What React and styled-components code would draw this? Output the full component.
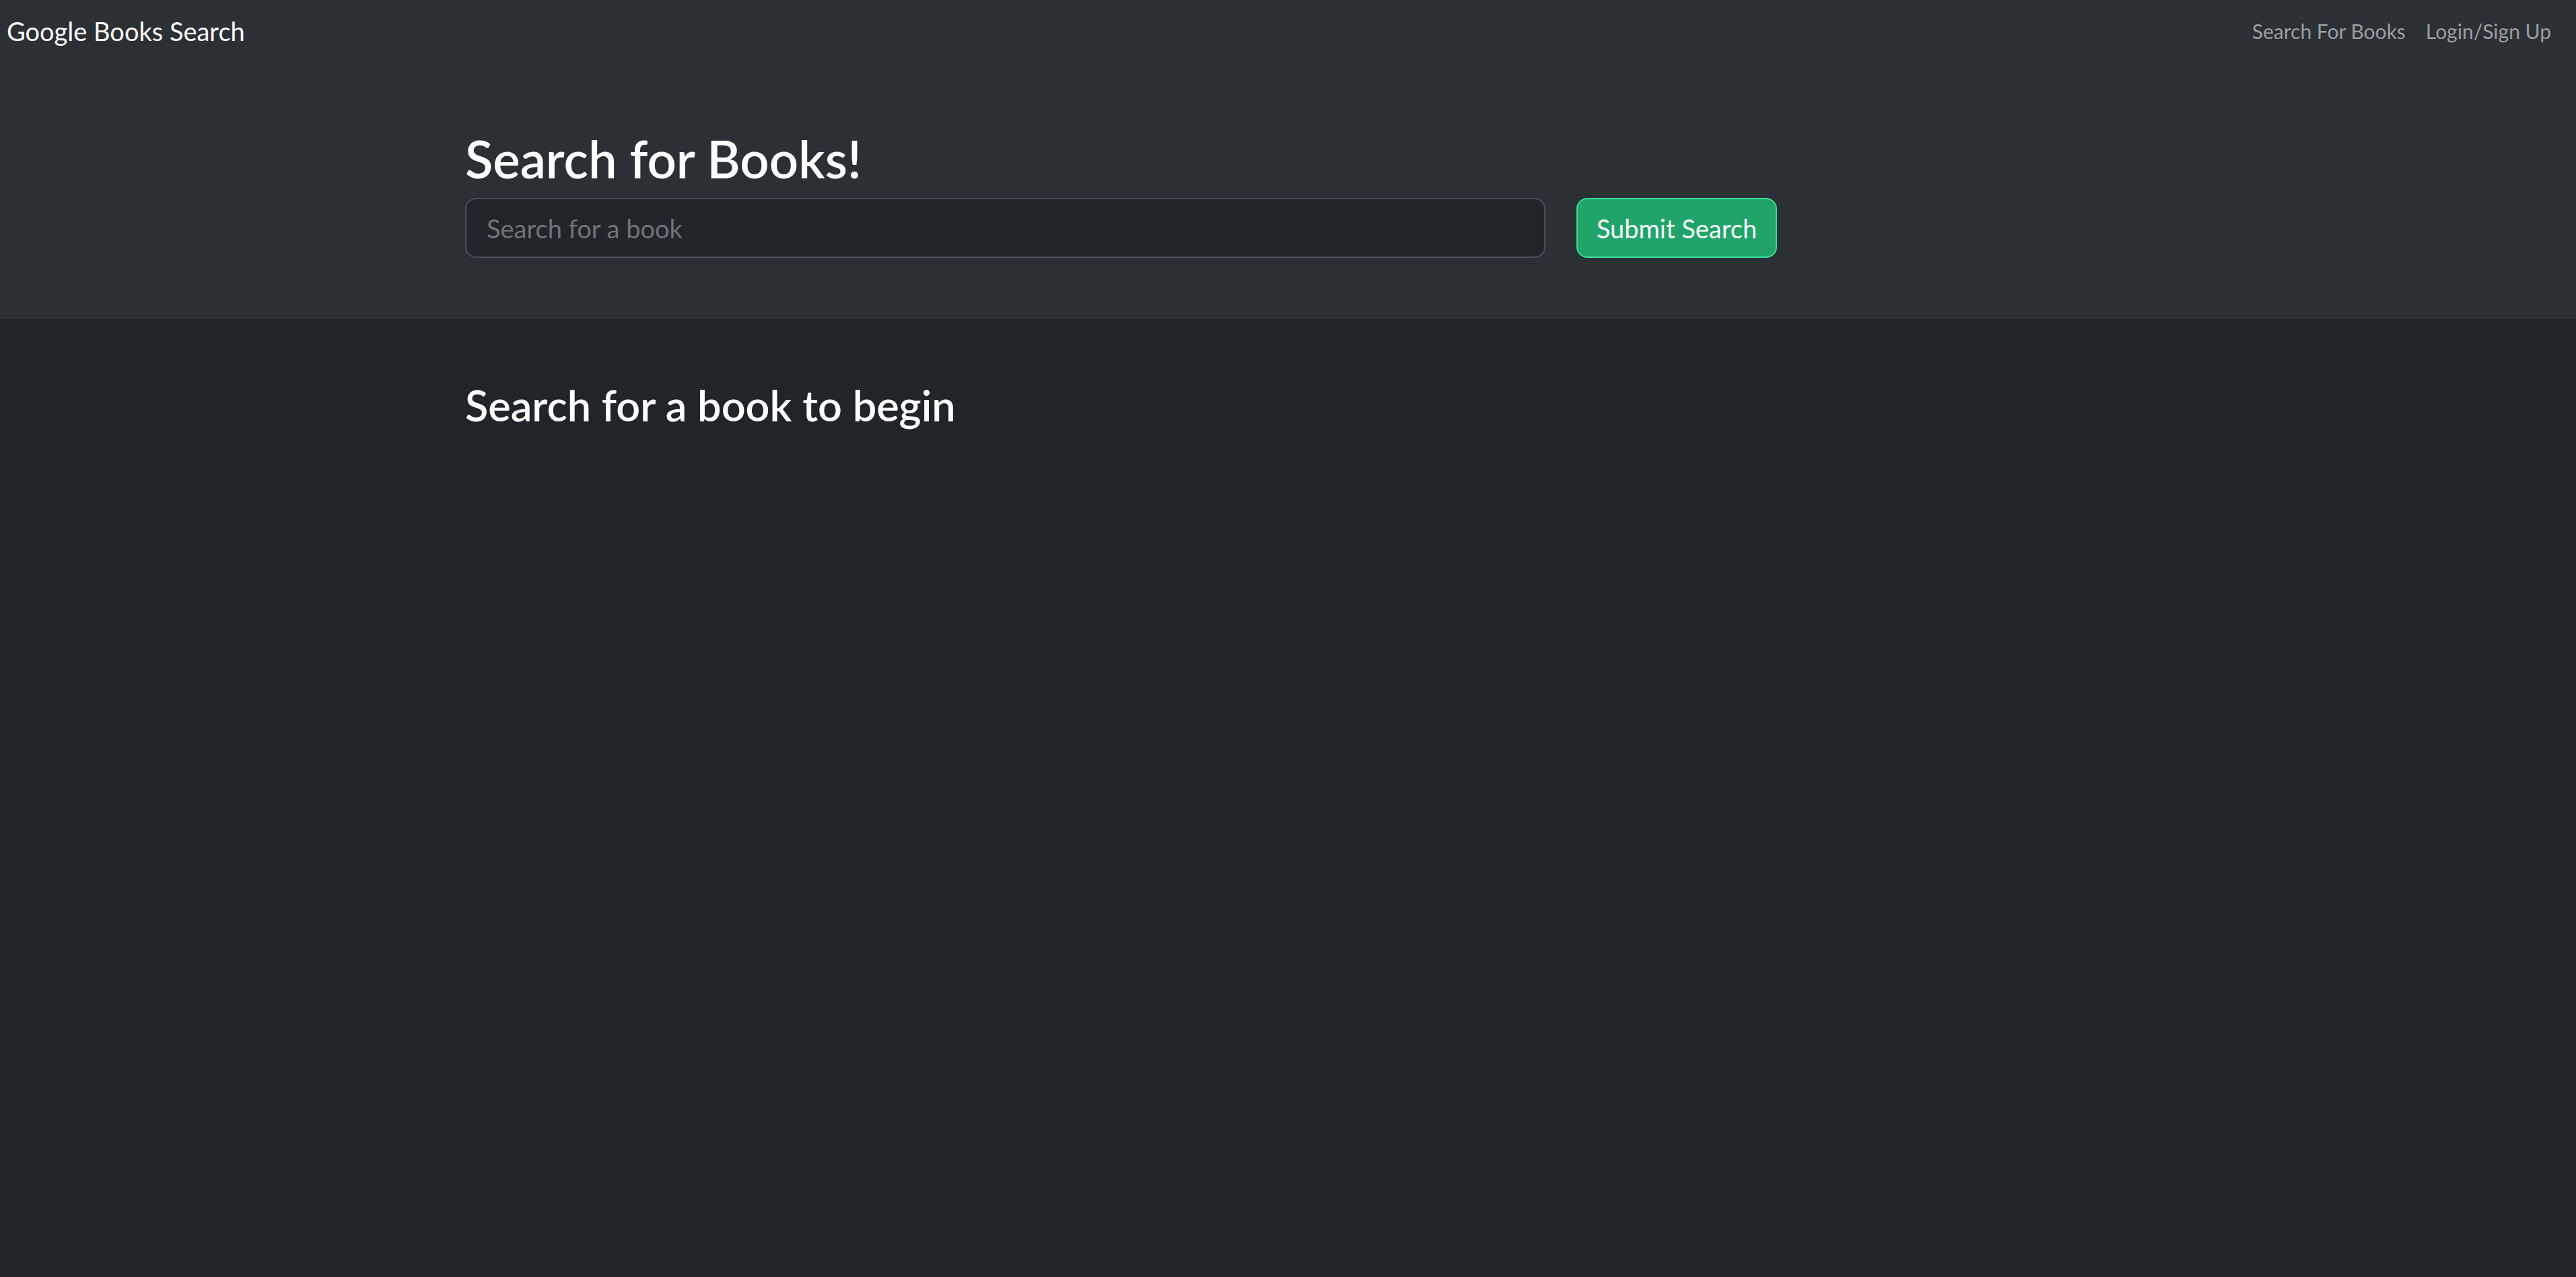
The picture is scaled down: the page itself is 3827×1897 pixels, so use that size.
import React from 'react'
import styled, { createGlobalStyle } from 'styled-components'

const GlobalStyle = createGlobalStyle`
  html, body {
    margin: 0;
    padding: 0;
    background: #212529;
    font-family: Lato, "Open Sans", sans-serif;
    color: #fff;
  }
  * {
    box-sizing: border-box;
  }
`

const Page = styled.div`
  min-height: 100vh;
  display: flex;
  flex-direction: column;
  background: #212529;
`

const Navbar = styled.nav`
  display: flex;
  justify-content: space-between;
  align-items: center;
  height: 96px;
  padding: 0 37px 4px 10px;
  background: #2b3035;
`

const Brand = styled.a`
  font-size: 38px;
  line-height: 1;
  color: #fff;
  text-decoration: none;
`

const NavLinks = styled.div`
  display: flex;
  gap: 30px;
`

const NavLink = styled.a`
  font-size: 30px;
  line-height: 1;
  color: #9b9ea1;
  text-decoration: none;
`

const Hero = styled.section`
  background: #2b3035;
  padding: 94px 0 91px 691px;
`

const Title = styled.h1`
  margin: 0 0 13px;
  font-size: 76px;
  font-weight: 600;
  line-height: 1.2;
`

const SearchRow = styled.form`
  display: flex;
  align-items: stretch;
  gap: 46px;
`

const SearchInput = styled.input`
  width: 1605px;
  height: 89px;
  padding: 0 30px;
  font-family: inherit;
  font-size: 38px;
  color: #dee2e6;
  background: #212529;
  border: 2px solid #495057;
  border-radius: 16px;
  outline: none;

  &::placeholder {
    color: #6f7378;
  }
`

const SubmitButton = styled.button`
  width: 298px;
  height: 89px;
  font-family: inherit;
  font-size: 38px;
  color: #fff;
  background: #20a46a;
  border: 2px solid #3ddc97;
  border-radius: 16px;
  cursor: pointer;
`

const Results = styled.main`
  flex: 1;
  padding: 90px 0 0 691px;
`

const ResultsTitle = styled.h2`
  margin: 0;
  font-size: 63px;
  font-weight: 600;
  line-height: 1.2;
`

export default function App() {
  return (
    <Page>
      <GlobalStyle />
      <Navbar>
        <Brand href="#">Google Books Search</Brand>
        <NavLinks>
          <NavLink href="#">Search For Books</NavLink>
          <NavLink href="#">Login/Sign Up</NavLink>
        </NavLinks>
      </Navbar>
      <Hero>
        <Title>Search for Books!</Title>
        <SearchRow onSubmit={e => e.preventDefault()}>
          <SearchInput placeholder="Search for a book" />
          <SubmitButton type="submit">Submit Search</SubmitButton>
        </SearchRow>
      </Hero>
      <Results>
        <ResultsTitle>Search for a book to begin</ResultsTitle>
      </Results>
    </Page>
  )
}
